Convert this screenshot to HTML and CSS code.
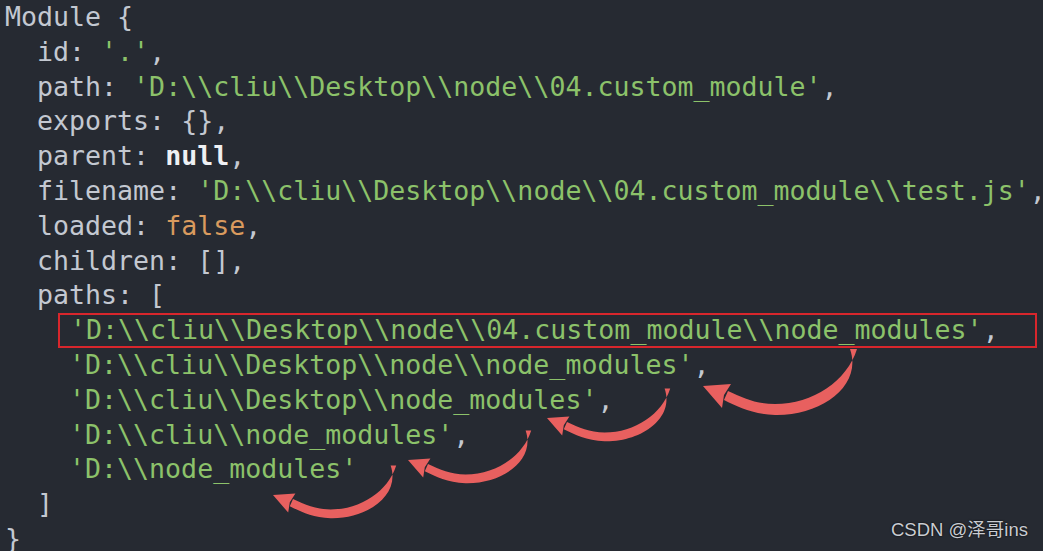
FILE: index.html
```html
<!DOCTYPE html>
<html lang="en">
<head>
    <meta charset="UTF-8">
    <meta name="viewport" content="width=device-width, initial-scale=1.0">
    <title>Module paths</title>
    <link rel="stylesheet" href="styles.css">
</head>
<body>
    <div class="screen">
        <div class="code">
            <div class="line">Module {</div>
            <div class="line">  <span class="key">id</span>: <span class="str">'.'</span>,</div>
            <div class="line">  <span class="key">path</span>: <span class="str">'D:\\cliu\\Desktop\\node\\04.custom_module'</span>,</div>
            <div class="line">  <span class="key">exports</span>: {},</div>
            <div class="line">  <span class="key">parent</span>: <span class="null">null</span>,</div>
            <div class="line">  <span class="key">filename</span>: <span class="str">'D:\\cliu\\Desktop\\node\\04.custom_module\\test.js'</span>,</div>
            <div class="line">  <span class="key">loaded</span>: <span class="bool">false</span>,</div>
            <div class="line">  <span class="key">children</span>: [],</div>
            <div class="line">  <span class="key">paths</span>: [</div>
            <div class="line highlight"><span class="str">'D:\\cliu\\Desktop\\node\\04.custom_module\\node_modules'</span>,</div>
            <div class="line">    <span class="str">'D:\\cliu\\Desktop\\node\\node_modules'</span>,</div>
            <div class="line">    <span class="str">'D:\\cliu\\Desktop\\node_modules'</span>,</div>
            <div class="line">    <span class="str">'D:\\cliu\\node_modules'</span>,</div>
            <div class="line">    <span class="str">'D:\\node_modules'</span></div>
            <div class="line">  ]</div>
            <div class="line">}</div>
        </div>

        <!-- lookup order arrows -->
        <svg class="arrows" width="1043" height="551" viewBox="0 0 1043 551">
            <defs>
                <g id="arrow">
                    <path d="M147 -37 C160 0 118 30 72 29 C49 28 35 21 21 14 L25 5 C40 12 53 18 72 18 C110 18 144 -5 154 -37 Z"/>
                    <path d="M0 0 L28 -2 L21 9 L19 22 Z"/>
                </g>
            </defs>
            <use href="#arrow" transform="translate(703 386)"/>
            <use href="#arrow" transform="translate(547 418) scale(0.8)"/>
            <use href="#arrow" transform="translate(408 460) scale(0.8)"/>
            <use href="#arrow" transform="translate(273 495) scale(0.8)"/>
        </svg>

        <div class="watermark">CSDN @泽哥ins</div>
    </div>
</body>
</html>
```

FILE: styles.css
```css
body {
    margin: 0;
    background: #262a32;
    overflow: hidden;
}
.screen {
    position: relative;
    width: 1043px;
    height: 551px;
    overflow: hidden;
}
.code {
    padding-left: 5px;
    font-family: "DejaVu Sans Mono", "Liberation Mono", monospace;
    font-size: 26.6px;
    line-height: 34.8px;
    color: #c3c8d1;
}
.line {
    white-space: pre;
}
.line.highlight {
    margin-left: 53px;
    padding-left: 12px;
    width: 979px;
    box-sizing: border-box;
    outline: 2px solid #d8262c;
    outline-offset: -2px;
}
.key {
    color: #c3c8d1;
}
.str {
    color: #8cc26a;
}
.bool {
    color: #d99a5e;
}
.null {
    color: #eef0f3;
    font-weight: bold;
}
.arrows {
    position: absolute;
    left: 0;
    top: 0;
    fill: #e8605f;
}
.watermark {
    position: absolute;
    right: 15px;
    bottom: 10px;
    font-family: "Liberation Sans", "Noto Sans CJK SC", sans-serif;
    font-size: 18.5px;
    color: #c9ccd2;
    text-shadow: 0 0 2px #000;
}
```
